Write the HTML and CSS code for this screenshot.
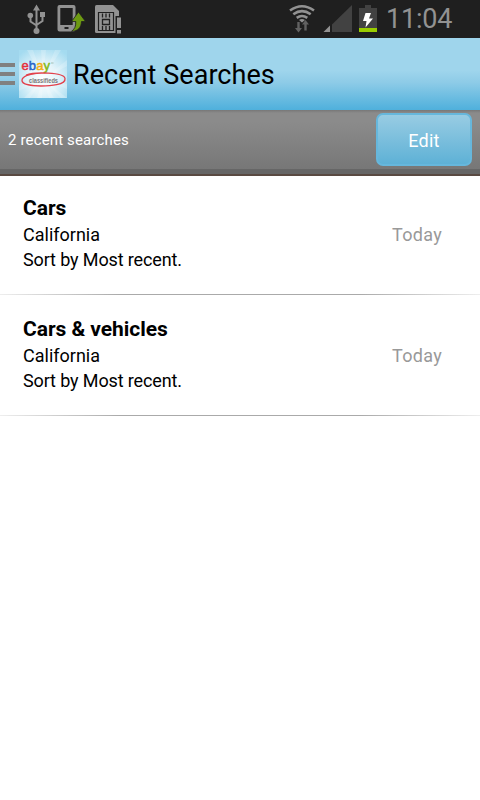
FILE: index.html
```html
<!DOCTYPE html>
<html lang="en">
<head>
<meta charset="UTF-8" />
<title>Recent Searches</title>
<link rel="stylesheet" href="styles.css">
</head>
<body>
	<!-- status bar -->
	<div class="status">
		<svg class="status-left" width="140" height="38" viewBox="0 0 140 38">
			<!-- usb -->
			<g fill="none" stroke="#929292" stroke-width="2">
				<path d="M36.500 8v23M30.500 17v4.500l6 4M42.500 16v5l-6 4"/>
			</g>
			<path fill="#929292" d="M36.500 4.500l3.500 6h-7zM40 12h5v5h-5z"/>
			<circle cx="30.300" cy="15.500" r="2.800" fill="#929292"/>
			<circle cx="36.500" cy="31" r="3" fill="#929292"/>
			<!-- phone update -->
			<path fill="#929292" fill-rule="evenodd" d="M59.500 5h14q2 0 2 2v22.500q0 2-2 2h-14q-2 0-2-2V7q0-2 2-2zM60.300 8v17h12.400V8zM64.500 27v2h4v-2z"/>
			<path fill="#6d9a12" stroke="#1f1f1f" stroke-width=".8" d="M78.500 12l7 9.500h-4c-.2 6-3.500 9.800-10 9.800 3-2 4.500-5 4.300-9.800h-4.300z"/>
			<!-- sim card -->
			<path fill="#929292" d="M98 5h15l6 6v20.500q0 1.500-1.500 1.500h-21q-1.500 0-1.500-1.500V6.500q0-1.500 1.500-1.500z"/>
			<path fill="none" stroke="#1f1f1f" stroke-width="1.200" d="M98.500 12.500h15v18h-15z"/>
			<path fill="none" stroke="#1f1f1f" stroke-width="1.300" d="M102.500 19.500h7v5h-7zM102.500 13.500v4M106 13.500v4M109.500 13.500v4M102.500 26v4M106 26v4M109.500 26v4"/>
			<path fill="#1f1f1f" d="M115.500 16h6v18h-6z"/>
			<path fill="#929292" d="M117 17.500h4v10.500h-4zM117 30h4v3.500h-4z"/>
		</svg>
		<svg class="status-right" width="100" height="38" viewBox="280 0 100 38">
			<!-- wifi -->
			<g fill="none" stroke="#929292" stroke-width="2.600">
				<path d="M290 10.500q12-8.500 24 0M293.300 14.300q8.700-6.300 17.400 0M296.700 17.800q5.300-3.600 10.600 0"/>
			</g>
			<path fill="#929292" d="M299 20q3-2 6 0l-3 2.500z"/>
			<path fill="#626262" d="M297.300 22h2.400v6h2.300l-3.500 4.500-3.500-4.500h2.300zM304.300 30.500v-6h-2.300l3.500-4.500 3.500 4.500h-2.300v6z"/>
			<!-- signal -->
			<path fill="#424242" d="M352 5v27h-20V24.500z"/>
			<path fill="#929292" d="M330 25.500V32h-6.500z"/>
			<!-- battery -->
			<path fill="#424242" d="M359 8h6V5h6v3h6v20h-18z"/>
			<path fill="#99cc00" d="M359 28h18v4h-18z"/>
			<path fill="#fff" d="M365.500 13h5.500l-2 5.500h4l-7.500 9 1-6.500h-3.500z"/>
		</svg>
		<span class="clock">11:04</span>
	</div>

	<!-- title bar -->
	<div class="header">
		<div class="menu"><i></i><i></i><i></i></div>
		<svg class="logo" width="48" height="48" viewBox="0 0 48 48">
			<defs>
				<radialGradient id="glow" cx=".5" cy=".6" r=".7">
					<stop offset="0" stop-color="#fff"/>
					<stop offset=".45" stop-color="#e3f4fa"/>
					<stop offset="1" stop-color="#a4dbf0"/>
				</radialGradient>
			</defs>
			<path fill="url(#glow)" d="M0 0h48v48H0z"/>
			<path fill="#fff" opacity=".2" d="M24 29L0 35v6zM24 29L5 48h6zM24 29L18 48h5zM24 29l6 19h5zM24 29l18 19h6zM24 29l24 5v5zM24 29L0 12v5zM24 29L8 0h6zM24 29L22 0h5zM24 29L36 0h6zM24 29l24-19v6z"/>
			<text class="logo-name" x="2.500" y="20"><tspan fill="#e5303c" stroke="#e5303c">e</tspan><tspan fill="#2864c8" stroke="#2864c8">b</tspan><tspan fill="#f2ae13" stroke="#f2ae13">a</tspan><tspan fill="#83b818" stroke="#83b818">y</tspan></text>
			<path stroke="#8a9" stroke-width=".7" d="M32 13h2.500"/>
			<text class="logo-sub" x="10" y="33" textLength="29" lengthAdjust="spacingAndGlyphs">classifieds</text>
			<path fill="none" stroke="#e2414c" stroke-width="1.300" d="M7 25C15 22 45 22 46 28.500S31 36 22 36 3 34.500 3 30.500 10 24 17 23.500"/>
		</svg>
		<h1 class="title">Recent Searches</h1>
	</div>

	<div class="toolbar">
		<span class="count">2 recent searches</span>
		<button class="edit">Edit</button>
	</div>

	<!-- saved searches -->
	<div class="list">
		<div class="item">
			<div class="info">
				<h2 class="name">Cars</h2>
				<p class="line">California</p>
				<p class="line sort">Sort by Most recent.</p>
			</div>
			<span class="date">Today</span>
		</div>
		<div class="item">
			<div class="info">
				<h2 class="name">Cars &amp; vehicles</h2>
				<p class="line">California</p>
				<p class="line sort">Sort by Most recent.</p>
			</div>
			<span class="date">Today</span>
		</div>
	</div>
</body>
</html>
```
FILE: styles.css
```css
* {box-sizing: border-box;}
body {margin: 0; background-color: #fff; font-family: Roboto, "Liberation Sans", sans-serif; color: #000;}
h1, h2, p {margin: 0; font-weight: normal; white-space: nowrap;}
svg {display: block; flex: none;}

.status {display: flex; height: 38px; background-color: #1f1f1f;}
.status-right {margin-left: 140px;}
.clock {margin-left: 6px; font-size: 27px; line-height: 38px; letter-spacing: -.2px; color: #929292;}

.header {display: flex; align-items: center; height: 72px; background: linear-gradient(#9fd5ec 0%, #9fd5ec 45%, #8dcbe7 62%, #4fb0dc 100%);}
.menu {display: flex; flex-direction: column; gap: 5px; width: 15px; margin-right: 4px;}
.menu i {height: 4px; background-color: #808080;}
.logo-name {font: 13px "Liberation Sans", sans-serif; letter-spacing: .1px; stroke-width: .5px;}
.logo-sub {font: bold 6.5px "Liberation Sans", sans-serif; fill: #777;}
.title {margin-left: 6px; padding-top: 2px; font-size: 27px; line-height: 72px; letter-spacing: .05px;}

.toolbar {display: flex; justify-content: space-between; height: 66px; padding: 3px 8px 0; border-bottom: 2px solid #594a42; background: linear-gradient(#777 0, #8b8b8b 3px, #8b8b8b 12px, #777 59px, #666 59px);}
.count {font-size: 15px; line-height: 54px; letter-spacing: .15px; color: #fff;}
.edit {width: 96px; height: 53px; padding: 2px 0 0; border: 2px solid #66b7dc; border-radius: 7px; background: linear-gradient(#98cce3, #5eb1d6); font: 18px Roboto, sans-serif; letter-spacing: .2px; color: #fff;}

.list {margin-top: -2px;}
.item {display: flex; align-items: center; justify-content: space-between; height: 121px; padding: 0 38px 0 23px; background: linear-gradient(90deg, #eee, #aaa 25%, #aaa 75%, #eee) bottom / 100% 1px no-repeat;}
.info {padding-bottom: 4px;}
.name {font-size: 21px; line-height: 28px; font-weight: bold; letter-spacing: -.05px;}
.line {font-size: 18px; line-height: 25px;}
.sort {letter-spacing: -.13px;}
.date {font-size: 18px; letter-spacing: .3px; color: #999;}
```
